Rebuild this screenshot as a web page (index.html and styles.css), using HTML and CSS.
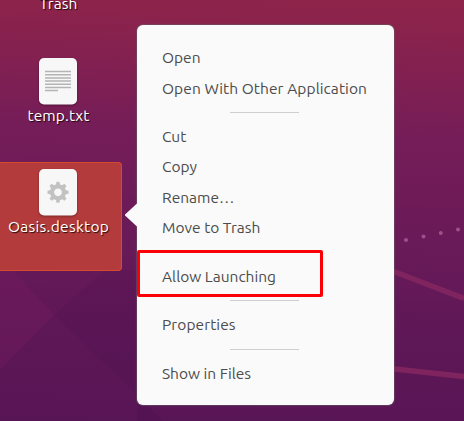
FILE: index.html
```html
<!DOCTYPE html>
<html lang="en">
<head>
<meta charset="utf-8">
<title>Desktop</title>
<link rel="stylesheet" href="styles.css">
</head>
<body>
<main class="desktop">
  <svg class="wallpaper" viewBox="0 0 464 421" aria-hidden="true">
    <path d="M0 260L12 270L54 315L0 370Z" fill="#7a1f60" opacity=".3"/>
    <path d="M54 315L105 270H137V395Z" fill="#48104f" opacity=".18"/>
    <path d="M137 395L163 421H137Z" fill="#48104f" opacity=".25"/>
    <path d="M390 270L464 298.500M390 368.500L464 376.500" stroke="#80245f" stroke-width="5.500" fill="none"/>
    <g fill="#a05089"><circle cx="406" cy="240" r="2"/><circle cx="423.500" cy="236.500" r="2"/><circle cx="440.800" cy="233" r="2"/><circle cx="458" cy="229.600" r="2"/></g>
  </svg>

  <section class="icons">
    <div class="file trash"><span class="label">Trash</span></div>
    <div class="file">
      <svg class="doc" viewBox="0 0 40 49">
        <rect class="sheet" x="1" y="1" width="38" height="46.500" rx="5"/>
        <path d="M7 14.500h26M7 17.700h26M7 20.900h26M7 24.100h26M7 27.300h26M7 30.500h26M7 33.500h13" stroke="#b4b4b4" stroke-width="1.500"/>
      </svg>
      <span class="label">temp.txt</span>
    </div>
    <div class="file selected">
      <svg class="doc" viewBox="0 0 40 49">
        <rect class="sheet" x="1" y="1" width="38" height="46.500" rx="5"/>
        <g transform="translate(20 24.300)">
          <circle r="6" fill="none" stroke="#c2c2c2" stroke-width="4.200"/>
          <g fill="#c2c2c2">
            <path id="tooth" d="M-2.200 -7L-1.500 -10.500H1.500L2.200 -7Z"/>
            <use href="#tooth" transform="rotate(45)"/><use href="#tooth" transform="rotate(90)"/><use href="#tooth" transform="rotate(135)"/><use href="#tooth" transform="rotate(180)"/><use href="#tooth" transform="rotate(225)"/><use href="#tooth" transform="rotate(270)"/><use href="#tooth" transform="rotate(315)"/>
          </g>
        </g>
      </svg>
      <span class="label wide">Oasis.desktop</span>
    </div>
  </section>

  <nav class="menu">
    <div class="item">Open</div>
    <div class="item long">Open With Other Application</div>
    <div class="separator"></div>
    <div class="item">Cut</div>
    <div class="item">Copy</div>
    <div class="item">Rename…</div>
    <div class="item">Move to Trash</div>
    <div class="separator"></div>
    <div class="item">Allow Launching<div class="highlight"></div></div>
    <div class="separator"></div>
    <div class="item long">Properties</div>
    <div class="separator"></div>
    <div class="item">Show in Files</div>
  </nav>
</main>
</body>
</html>
```
FILE: styles.css
```css
* { box-sizing: border-box; }
body { margin: 0; overflow: hidden; font-family: Ubuntu, "Noto Sans", sans-serif; }
.desktop {
  position: relative;
  width: 464px;
  height: 421px;
  overflow: hidden;
  display: flex;
  background: linear-gradient(182deg, #8f2449 0%, #842150 15%, #751d58 32%, #6a1a58 55%, #5e1757 78%, #581555 100%);
}
.wallpaper { position: absolute; inset: 0; width: 464px; height: 421px; }
.icons { position: relative; width: 123px; flex: none; }
.file {
  display: flex;
  flex-direction: column;
  align-items: center;
  width: 122px;
  height: 108px;
  padding: 6px 6px 0 0;
}
.file.trash { height: 51px; padding-top: 0; }
.trash .label { margin-top: -6px; }
.file.selected {
  margin-top: 3px;
  padding: 5px 5px 0 0;
  height: 109px;
  border: solid #d64931;
  border-width: 1px 1px 1px 0;
  border-radius: 0 4px 4px 0;
  background: #b43b3c;
}
.doc { width: 40px; height: 49px; flex: none; filter: drop-shadow(0 1px 1px #0005); }
.sheet { fill: #f7f7f7; }
.label {
  margin-left: 1px;
  color: #fff;
  font-size: 15.5px;
  line-height: 20px;
  letter-spacing: .12px;
  white-space: nowrap;
  text-shadow: 1px 1px 1px #000c;
}
.label.wide { letter-spacing: .3px; }
.menu {
  position: relative;
  width: 257px;
  height: 380px;
  margin: 25px 0 0 14px;
  padding: 18px 0 16px;
  flex: none;
  border-radius: 6px;
  background: #fafafa;
  box-shadow: 0 0 1px 1px #66616688;
}
.menu::before {
  content: "";
  position: absolute;
  left: -12.5px;
  top: 178px;
  width: 13px;
  height: 24px;
  background: #fafafa;
  clip-path: polygon(0 50%, 100% 0, 100% 100%);
}
.item {
  position: relative;
  height: 30.4px;
  padding-left: 25px;
  display: flex;
  align-items: center;
  color: #4c4c4c;
  font-size: 15.5px;
  line-height: 20px;
  white-space: nowrap;
}
.item.long { letter-spacing: .08px; }
.separator { width: 69px; height: 18.1px; margin-left: 93px; display: flex; align-items: center; }
.separator::before { content: ""; width: 69px; height: 1px; background: #cfcfcf; }
.highlight {
  position: absolute;
  left: 0;
  top: -12px;
  width: 186px;
  height: 47px;
  border: 3px solid #fa0006;
  border-radius: 2px;
}
```
